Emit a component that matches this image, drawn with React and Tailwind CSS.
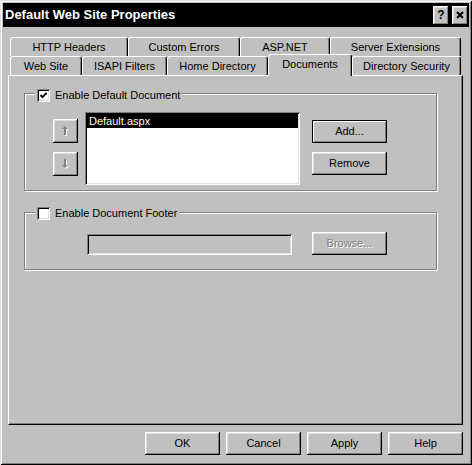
import React from 'react';

const raised =
  'shadow-[inset_-1px_-1px_#000,inset_1px_1px_#fff,inset_-2px_-2px_#808080,inset_2px_2px_#dfdfdf]';
const sunken =
  'shadow-[inset_1px_1px_#808080,inset_-1px_-1px_#fff,inset_2px_2px_#000,inset_-2px_-2px_#dfdfdf]';

const Button = ({ children, className = '', isDefault = false, disabled = false }) => (
  <div
    className={`flex items-center justify-center bg-[#c0c0c0] text-[11px] ${
      isDefault
        ? 'border border-black shadow-[inset_1px_1px_#fff,inset_-1px_-1px_#808080]'
        : raised
    } ${disabled ? 'text-[#808080] [text-shadow:1px_1px_#fff]' : 'text-black'} ${className}`}
  >
    {children}
  </div>
);

const Checkbox = ({ checked }) => (
  <div className={`w-[13px] h-[13px] bg-white flex items-center justify-center ${sunken}`}>
    {checked && (
      <svg width="9" height="9" viewBox="0 0 9 9">
        <path d="M1.5 4 L3.5 6.2 L7.6 1.8" stroke="#000" strokeWidth="1.9" fill="none" />
      </svg>
    )}
  </div>
);

const Arrow = ({ down }) => {
  const d = down
    ? 'M3 0 L5 0 L5 6 L7 6 L4 9 L1 6 L3 6 Z'
    : 'M4 0 L7 3 L5 3 L5 9 L3 9 L3 3 L1 3 Z';
  return (
    <svg width="10" height="11" viewBox="0 0 10 11">
      <path d={d} fill="#fff" transform="translate(1,1)" />
      <path d={d} fill="#808080" />
    </svg>
  );
};

const GroupBox = ({ label, checked, className = '', children }) => (
  <div
    className={`w-[413px] border border-[#808080] shadow-[inset_1px_1px_#fff,1px_1px_#fff] flex flex-col ${className}`}
  >
    {children(
      <div className="self-start ml-[10px] flex items-center gap-[5px] px-[2px] bg-[#c0c0c0] h-[13px] text-[11px]">
        <Checkbox checked={checked} />
        <span>{label}</span>
      </div>
    )}
  </div>
);

const tab = 'flex items-center justify-center text-[11px] bg-[#c0c0c0] border-l border-t border-white border-r border-r-black shadow-[inset_-1px_0_#808080] rounded-t-[3px]';

const row1 = [
  ['HTTP Headers', 'w-[118px]'],
  ['Custom Errors', 'w-[112px]'],
  ['ASP.NET', 'w-[90px]'],
  ['Server Extensions', 'w-[131px]'],
];

const row2 = [
  ['Web Site', 'w-[72px]'],
  ['ISAPI Filters', 'w-[85px]'],
  ['Home Directory', 'w-[101px]'],
  ['Documents', 'w-[84px]', true],
  ['Directory Security', 'w-[109px]'],
];

export default function App() {
  return (
    <div className="w-[472px] h-[465px] bg-[#c0c0c0] p-[3px] flex flex-col text-black font-['Liberation_Sans',Arial,sans-serif] shadow-[inset_1px_1px_#dfdfdf,inset_-1px_-1px_#000,inset_2px_2px_#fff,inset_-2px_-2px_#808080]">
      <div className="h-[24px] bg-black flex items-center pl-[2px] pr-[1px]">
        <span className="flex-1 text-white font-bold text-[13px]">Default Web Site Properties</span>
        <div className="flex gap-[3px]">
          <div className={`w-[16px] h-[19px] bg-[#c0c0c0] flex items-center justify-center font-bold text-[12px] ${raised}`}>
            ?
          </div>
          <div className={`w-[16px] h-[19px] bg-[#c0c0c0] flex items-center justify-center ${raised}`}>
            <svg width="8" height="8" viewBox="0 0 8 8">
              <path d="M1 1 L7 7 M7 1 L1 7" stroke="#000" strokeWidth="2" />
            </svg>
          </div>
        </div>
      </div>

      <div className="pl-[5px] mt-[10px] flex flex-col">
        <div className="ml-[2px] w-[451px] flex flex-col">
          <div className="flex">
            {row1.map(([label, w]) => (
              <div key={label} className={`${tab} ${w} h-[19px] pt-[1px]`}>
                {label}
              </div>
            ))}
          </div>
          <div className="flex items-end -mt-[2px]">
            {row2.map(([label, w, active]) => (
              <div
                key={label}
                className={`${tab} ${w} ${active ? 'h-[22px] relative z-10 pb-[3px]' : 'h-[19px] mb-px'}`}
              >
                {label}
              </div>
            ))}
          </div>
        </div>

        <div className="-mt-px w-[455px] h-[350px] border-l border-t border-white border-r border-b border-r-black border-b-black shadow-[inset_-1px_-1px_#808080] pl-[15px] pt-[17px] flex flex-col">
          <GroupBox label="Enable Default Document" checked className="h-[98px]">
            {(title) => (
              <>
                <div className="-mt-[5px] flex">{title}</div>
                <div className="flex items-start mt-[10px] pl-[28px]">
                  <div className="flex flex-col gap-[9px] mt-[7px]">
                    <Button className="w-[25px] h-[24px]">
                      <Arrow />
                    </Button>
                    <Button className="w-[25px] h-[24px]">
                      <Arrow down />
                    </Button>
                  </div>
                  <div className={`ml-[7px] w-[215px] h-[73px] bg-white p-[2px] ${sunken}`}>
                    <div className="h-[14px] bg-black text-white text-[11px] pl-[2px] flex items-center">
                      Default.aspx
                    </div>
                  </div>
                  <div className="ml-[12px] mt-[8px] flex flex-col gap-[9px]">
                    <Button isDefault className="w-[75px] h-[23px]">
                      Add...
                    </Button>
                    <Button className="w-[75px] h-[23px]">Remove</Button>
                  </div>
                </div>
              </>
            )}
          </GroupBox>

          <GroupBox label="Enable Document Footer" className="h-[58px] mt-[21px]">
            {(title) => (
              <>
                <div className="-mt-[6px] flex">{title}</div>
                <div className="flex items-start mt-[12px] pl-[62px]">
                  <div className={`w-[205px] h-[21px] mt-[2px] bg-[#c0c0c0] ${sunken}`} />
                  <Button disabled className="ml-[20px] w-[75px] h-[23px]">
                    Browse...
                  </Button>
                </div>
              </>
            )}
          </GroupBox>
        </div>

        <div className="ml-[137px] mt-[7px] flex gap-[6px]">
          <Button className="w-[75px] h-[23px]">OK</Button>
          <Button className="w-[75px] h-[23px]">Cancel</Button>
          <Button className="w-[75px] h-[23px]">Apply</Button>
          <Button className="w-[75px] h-[23px]">Help</Button>
        </div>
      </div>
    </div>
  );
}
